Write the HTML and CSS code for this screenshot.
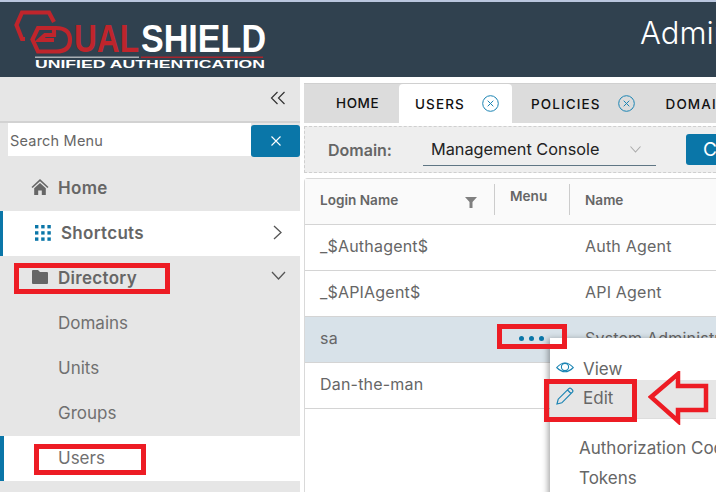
FILE: index.html
```html
<!DOCTYPE html>
<html lang="en">
<head>
<meta charset="utf-8">
<title>DualShield Admin</title>
<link rel="stylesheet" href="styles.css">
</head>
<body>
<div class="app">
  <header class="topbar">
    <svg class="logo" width="270" height="75" viewBox="0 0 270 75" aria-label="DualShield Unified Authentication">
      <g fill="none" stroke="#bf252c" stroke-width="4.2" stroke-linejoin="miter">
        <path d="M25 37 H22 L16.5 23 L22 10.5 H49 L54 20"/>
        <path d="M38 26 H56 Q70 26 70 38 Q70 49.5 56 49.5 H38 L32.5 37.5 Z"/>
        <path d="M54 26 V33 H45 L39.5 38 H54"/>
      </g>
      <text x="74" y="50" class="logo-big logo-red" textLength="65" lengthAdjust="spacingAndGlyphs">UAL</text>
      <text x="141" y="50" class="logo-big logo-white" textLength="125" lengthAdjust="spacingAndGlyphs">SHIELD</text>
      <rect x="35" y="54.5" width="104" height="1.5" fill="#a9b0b5"/>
      <rect x="141" y="54.5" width="122" height="1.5" fill="#a8252d"/>
      <text x="35" y="65.5" class="logo-small" textLength="230" lengthAdjust="spacingAndGlyphs">UNIFIED AUTHENTICATION</text>
    </svg>
    <div class="app-title">Administration</div>
  </header>

  <div class="body">
    <aside class="sidebar">
      <div class="collapse-row">
        <svg width="16" height="14" viewBox="0 0 16 14" fill="none" stroke="#333" stroke-width="1.2"><path d="M7.5 1 L1.5 7 L7.5 13 M14.5 1 L8.5 7 L14.5 13"/></svg>
      </div>
      <div class="search-row">
        <div class="search-input">Search Menu</div>
        <div class="search-btn">
          <svg width="10" height="10" viewBox="0 0 10 10" stroke="#fff" stroke-width="1.1"><path d="M.5 .5 L9.5 9.5 M9.5 .5 L.5 9.5"/></svg>
        </div>
      </div>
      <nav class="nav">
        <div class="nav-item nav-top">
          <svg class="home-icon" width="18" height="18" viewBox="0 0 18 18" fill="#666"><path d="M9 1 L17.5 9 L16.4 10 L9 3.2 L1.6 10 L.5 9 Z M3.2 10.2 L9 4.9 L14.8 10.2 V17 H10.8 V12.4 H7.2 V17 H3.2 Z"/></svg>
          <span class="nav-label">Home</span>
        </div>
        <div class="nav-item nav-top nav-active">
          <svg class="grid-icon" width="16" height="16" viewBox="0 0 16 16" fill="#0a76a8">
            <rect x="0" y="0" width="3.4" height="3.4"/><rect x="6.2" y="0" width="3.4" height="3.4"/><rect x="12.4" y="0" width="3.4" height="3.4"/>
            <rect x="0" y="6.2" width="3.4" height="3.4"/><rect x="6.2" y="6.2" width="3.4" height="3.4"/><rect x="12.4" y="6.2" width="3.4" height="3.4"/>
            <rect x="0" y="12.4" width="3.4" height="3.4"/><rect x="6.2" y="12.4" width="3.4" height="3.4"/><rect x="12.4" y="12.4" width="3.4" height="3.4"/>
          </svg>
          <span class="nav-label">Shortcuts</span>
          <svg class="nav-caret" width="9" height="15" viewBox="0 0 9 15" fill="none" stroke="#555" stroke-width="1.3"><path d="M1 1 L8 7.5 L1 14"/></svg>
        </div>
        <div class="nav-item nav-top nav-dir">
          <svg class="folder-icon" width="16" height="15" viewBox="0 0 16 15" fill="#666"><path d="M0 2 Q0 1 1 1 H6 L8 3 H15 Q16 3 16 4 V14 Q16 15 15 15 H1 Q0 15 0 14 Z"/></svg>
          <span class="nav-label">Directory</span>
          <svg class="nav-caret-down" width="15" height="9" viewBox="0 0 15 9" fill="none" stroke="#555" stroke-width="1.3"><path d="M1 1 L7.5 8 L14 1"/></svg>
        </div>
        <div class="nav-item nav-sub">Domains</div>
        <div class="nav-item nav-sub">Units</div>
        <div class="nav-item nav-sub">Groups</div>
        <div class="nav-item nav-sub nav-active-sub">Users</div>
      </nav>
    </aside>

    <main class="main">
      <div class="tabs">
        <div class="tab tab-home">HOME</div>
        <div class="tab tab-current">USERS
          <svg class="tab-close" width="17" height="17" viewBox="0 0 17 17" fill="none" stroke="#1b84b3" stroke-width="1"><circle cx="8.5" cy="8.5" r="7.8"/><path d="M5.7 5.7 L11.3 11.3 M11.3 5.7 L5.7 11.3"/></svg>
        </div>
        <div class="tab tab-policies">POLICIES
          <svg class="tab-close" width="17" height="17" viewBox="0 0 17 17" fill="none" stroke="#1b84b3" stroke-width="1"><circle cx="8.5" cy="8.5" r="7.8"/><path d="M5.7 5.7 L11.3 11.3 M11.3 5.7 L5.7 11.3"/></svg>
        </div>
        <div class="tab">DOMAINS</div>
      </div>

      <div class="domain-bar">
        <span class="domain-label">Domain:</span>
        <div class="domain-select">
          <span>Management Console</span>
          <svg width="11" height="7" viewBox="0 0 11 7" fill="none" stroke="#aaa" stroke-width="1.1"><path d="M.5 .5 L5.5 6 L10.5 .5"/></svg>
        </div>
        <div class="domain-btn">Create</div>
      </div>

      <div class="table">
        <div class="row row-head">
          <div class="cell col-login head-login">Login Name
            <svg class="filter-icon" width="12" height="11" viewBox="0 0 12 11" fill="#808080"><path d="M0 0 H12 L7.5 5 V11 H4.5 V5 Z"/></svg>
          </div>
          <div class="cell col-menu head-menu">Menu</div>
          <div class="cell col-name head-name">Name</div>
        </div>
        <div class="row"><div class="cell col-login">_$Authagent$</div><div class="cell col-menu"></div><div class="cell col-name">Auth Agent</div></div>
        <div class="row"><div class="cell col-login">_$APIAgent$</div><div class="cell col-menu"></div><div class="cell col-name">API Agent</div></div>
        <div class="row row-selected"><div class="cell col-login">sa</div><div class="cell col-menu dots"><i></i><i></i><i></i></div><div class="cell col-name">System Administrator</div></div>
        <div class="row"><div class="cell col-login">Dan-the-man</div><div class="cell col-menu"></div><div class="cell col-name"></div></div>
      </div>

      <div class="popup">
        <div class="popup-item popup-icon-item">
          <svg class="popup-eye" width="18" height="13" viewBox="0 0 18 13" fill="none" stroke="#1b84b3" stroke-width="1.1"><path d="M.7 6.5 Q9 -2.5 17.3 6.5 Q9 15 .7 6.5 Z"/><circle cx="9" cy="6" r="3.6"/></svg>
          <span>View</span>
        </div>
        <div class="popup-item popup-icon-item popup-hover">
          <svg class="popup-pencil" width="18" height="18" viewBox="0 0 18 18" fill="none" stroke="#1b84b3" stroke-width="1.2"><path d="M1 17 L2.2 12.2 L12.8 1.6 Q14 .6 15.2 1.6 L16.4 2.8 Q17.4 4 16.4 5.2 L5.8 15.8 Z M11.5 3 L15 6.5"/></svg>
          <span>Edit</span>
        </div>
        <div class="popup-divider"></div>
        <div class="popup-item">Authorization Codes</div>
        <div class="popup-item">Tokens</div>
      </div>
    </main>
  </div>

  <div class="mark mark-dir"></div>
  <div class="mark mark-users"></div>
  <div class="mark mark-dots"></div>
  <div class="mark mark-edit"></div>
  <svg class="mark-arrow" width="64" height="54" viewBox="0 0 64 54" fill="none" stroke="#ed1c24" stroke-width="4.5"><path d="M3 26 L30 3 V15 H58 V39 H30 V50 Z"/></svg>
</div>
</body>
</html>
```
FILE: styles.css
```css
* { box-sizing: border-box; }
html, body { margin: 0; padding: 0; }
body { width: 716px; height: 492px; overflow: hidden; font-family: Inter, "Noto Sans", sans-serif; color: #666; background: #fff; }
.app { position: relative; width: 716px; height: 492px; overflow: hidden; display: flex; flex-direction: column; }

.topbar { height: 77px; flex: none; background: #30414f; border-top: 2px solid #b9c6de; display: flex; justify-content: space-between; }
.logo { flex: none; display: block; }
.logo-big { font-family: "Liberation Sans", sans-serif; font-size: 39px; font-weight: 700; }
.logo-red { fill: #bf252c; }
.logo-white { fill: #fff; }
.logo-small { font-family: "Liberation Sans", sans-serif; font-size: 11.5px; font-weight: 700; fill: #fff; }
.app-title { flex: none; width: 76px; overflow: hidden; white-space: nowrap; font-size: 31px; color: #fff; padding-top: 12px; font-weight: 300; }

.body { flex: 1; min-height: 0; display: flex; }
.sidebar { flex: none; width: 300px; background: #e6e6e6; display: flex; flex-direction: column; }
.collapse-row { height: 46px; flex: none; border-bottom: 2px solid #d2d2d2; display: flex; justify-content: flex-end; align-items: center; padding: 0 14px 2px 0; }
.search-row { height: 47px; flex: none; display: flex; padding-left: 8px; align-items: flex-start; }
.search-input { width: 243px; height: 33px; background: #fff; font-size: 14.5px; color: #666; display: flex; align-items: center; padding: 2px 0 0 2px; letter-spacing: .2px; }
.search-btn { width: 49px; height: 32px; margin-top: 2px; background: #0a76a8; border-radius: 3px; display: flex; align-items: center; justify-content: center; }

.nav { display: flex; flex-direction: column; }
.nav-item { height: 45px; flex: none; display: flex; align-items: center; color: #666; padding-bottom: 2px; }
.nav-top { font-size: 17px; font-weight: 600; letter-spacing: .3px; }
.nav-label { margin-left: 9px; }
.home-icon { margin-left: 31px; margin-top: -3px; }
.nav-top:first-child { height: 41px; align-items: flex-start; padding-bottom: 0; }
.nav-top:first-child .nav-label, .nav-top:first-child .home-icon { margin-top: 8px; }
.nav-active { background: #fff; border-left: 3px solid #0a76a8; }
.grid-icon { margin-left: 32px; }
.nav-active .nav-label { margin-left: 10px; }
.nav-caret { margin-left: auto; margin-right: 18px; }
.folder-icon { margin-left: 32px; margin-top: -2px; }
.nav-dir .nav-label { margin-left: 10px; margin-top: 0; }
.nav-caret-down { margin-left: auto; margin-right: 14px; margin-top: -4px; }
.nav-sub { font-size: 17px; padding-left: 58px; font-weight: 400; color: #707070; }
.nav-active-sub { background: #fff; border-left: 4px solid #0a76a8; padding-left: 54px; }

.main { position: relative; flex: 1; min-width: 0; padding: 6px 0 0 4px; display: flex; flex-direction: column; overflow: hidden; }
.tabs { height: 40px; flex: none; background: #dcdcdc; border-top: 1px solid #d0d0d0; display: flex; align-items: center; padding-left: 32px; white-space: nowrap; }
.tab { font-size: 13.5px; color: #111; letter-spacing: 1.1px; font-weight: 500; display: flex; align-items: center; flex: none; }
.tab-home { width: 63px; margin-top: -2px; letter-spacing: .6px; }
.tab-current { width: 113px; height: 39px; background: #fff; border-radius: 4px 4px 0 0; padding-left: 16px; margin-right: 19px; }
.tab-close { margin-left: 17px; flex: none; }
.tab-policies { margin-right: 31px; }

.domain-bar { height: 47px; flex: none; margin-top: 3px; background: #eee; border: 1px dashed #cfcfcf; border-right: none; display: flex; align-items: center; padding-left: 23px; white-space: nowrap; }
.domain-label { font-size: 16px; font-weight: 600; color: #666; width: 95px; flex: none; }
.domain-select { width: 233px; height: 32px; flex: none; border-bottom: 1px solid #5f7684; display: flex; align-items: center; justify-content: space-between; padding: 0 15px 0 8px; font-size: 16.3px; color: #222; }
.domain-btn { margin-left: 30px; width: 90px; height: 31px; flex: none; background: #0a76a8; color: #fff; border-radius: 3px; font-size: 19px; display: flex; align-items: center; padding-left: 17px; }

.table { margin-top: 5px; flex: 1; border-top: 1px solid #d9d9d9; border-left: 1px solid #d9d9d9; border-radius: 4px 0 0 0; background: #fff; }
.row { height: 46px; display: flex; align-items: center; border-bottom: 1px solid #d4d4d4; font-size: 16px; letter-spacing: .2px; color: #666; white-space: nowrap; }
.row > .cell { padding-bottom: 3px; }
.row-head { height: 46px; background: #fafafa; border-bottom: 1px solid #d4d4d4; font-size: 13.6px; letter-spacing: 0; font-weight: 600; padding-bottom: 1px; }
.row-selected { background: #d8e2e9; }
.cell { display: flex; align-items: center; flex: none; height: 100%; }
.col-login { width: 189px; padding-left: 15px; }
.col-menu { width: 76px; }
.col-name { flex: 1; padding-left: 15px; overflow: hidden; }
.head-login { position: relative; }
.filter-icon { position: absolute; left: 160px; top: 18px; }
.row > .head-menu { height: 31px; border-left: 1px solid #ccc; border-right: 1px solid #ccc; padding-left: 15px; padding-bottom: 6px; margin-top: -4px; }
.dots { gap: 5px; padding-left: 25px; }
.dots i { width: 5px; height: 5px; border-radius: 50%; background: #0a76a8; display: block; }

.popup { position: absolute; left: 250px; top: 261px; width: 200px; height: 160px; background: #fff; box-shadow: -2px 1px 6px rgba(0,0,0,.35); padding-top: 16px; font-size: 17px; color: #666; white-space: nowrap; }
.popup-item { display: flex; align-items: center; padding-left: 29px; height: 30px; }
.popup-icon-item { padding-left: 6px; gap: 9px; }
.popup-eye { margin-top: -4px; }
.popup-hover { background: #e6e6e6; height: 38px; padding-left: 6px; gap: 9px; margin-top: -4px; padding-bottom: 2px; }
.popup-pencil { margin-top: -5px; }
.popup-divider { height: 1px; background: #ddd; margin-bottom: 14px; }

.mark { position: absolute; border: 5px solid #ed1c24; }
.mark-dir { left: 14px; top: 263px; width: 156px; height: 31px; }
.mark-users { left: 34px; top: 444px; width: 112px; height: 31px; }
.mark-dots { left: 497px; top: 324px; width: 70px; height: 25px; }
.mark-edit { left: 544px; top: 379px; width: 93px; height: 43px; }
.mark-arrow { position: absolute; left: 648px; top: 371px; }
```
